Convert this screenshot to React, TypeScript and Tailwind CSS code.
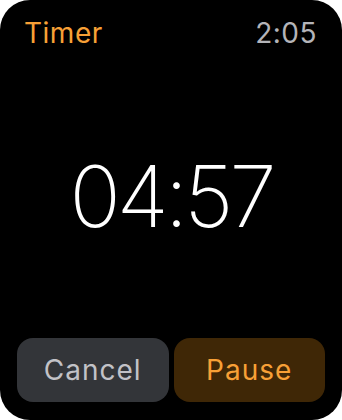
export default function App() {
  return (
    <div className="w-[342px] h-[420px] bg-white">
      <div
        className="w-full h-full bg-black rounded-[30px] flex flex-col overflow-hidden"
        style={{ fontFamily: "Inter, 'Noto Sans', sans-serif" }}
      >
        {/* header */}
        <div className="flex items-center justify-between pl-[24px] pr-[25px] pt-[12px] h-[54px]">
          <span className="text-[28px] leading-none tracking-[0.5px] text-[#f8a036]">Timer</span>
          <span className="text-[28px] leading-none tracking-[0.5px] text-[#b4b4b9]">2:05</span>
        </div>

        {/* countdown */}
        <div className="flex-1 flex items-center justify-center">
          <span className="text-[85px] leading-none font-extralight text-white tracking-[-4px]">
            04:57
          </span>
        </div>

        {/* actions */}
        <div className="flex gap-[5px] px-[17px] pb-[18px]">
          <button className="flex-1 h-[64px] rounded-[16px] bg-[#333539] text-[#c2c2c7] text-[28px] tracking-[1px]">
            Cancel
          </button>
          <button className="flex-1 h-[64px] rounded-[16px] bg-[#3f2706] text-[#f8a036] text-[28px] tracking-[1px]">
            Pause
          </button>
        </div>
      </div>
    </div>
  );
}
